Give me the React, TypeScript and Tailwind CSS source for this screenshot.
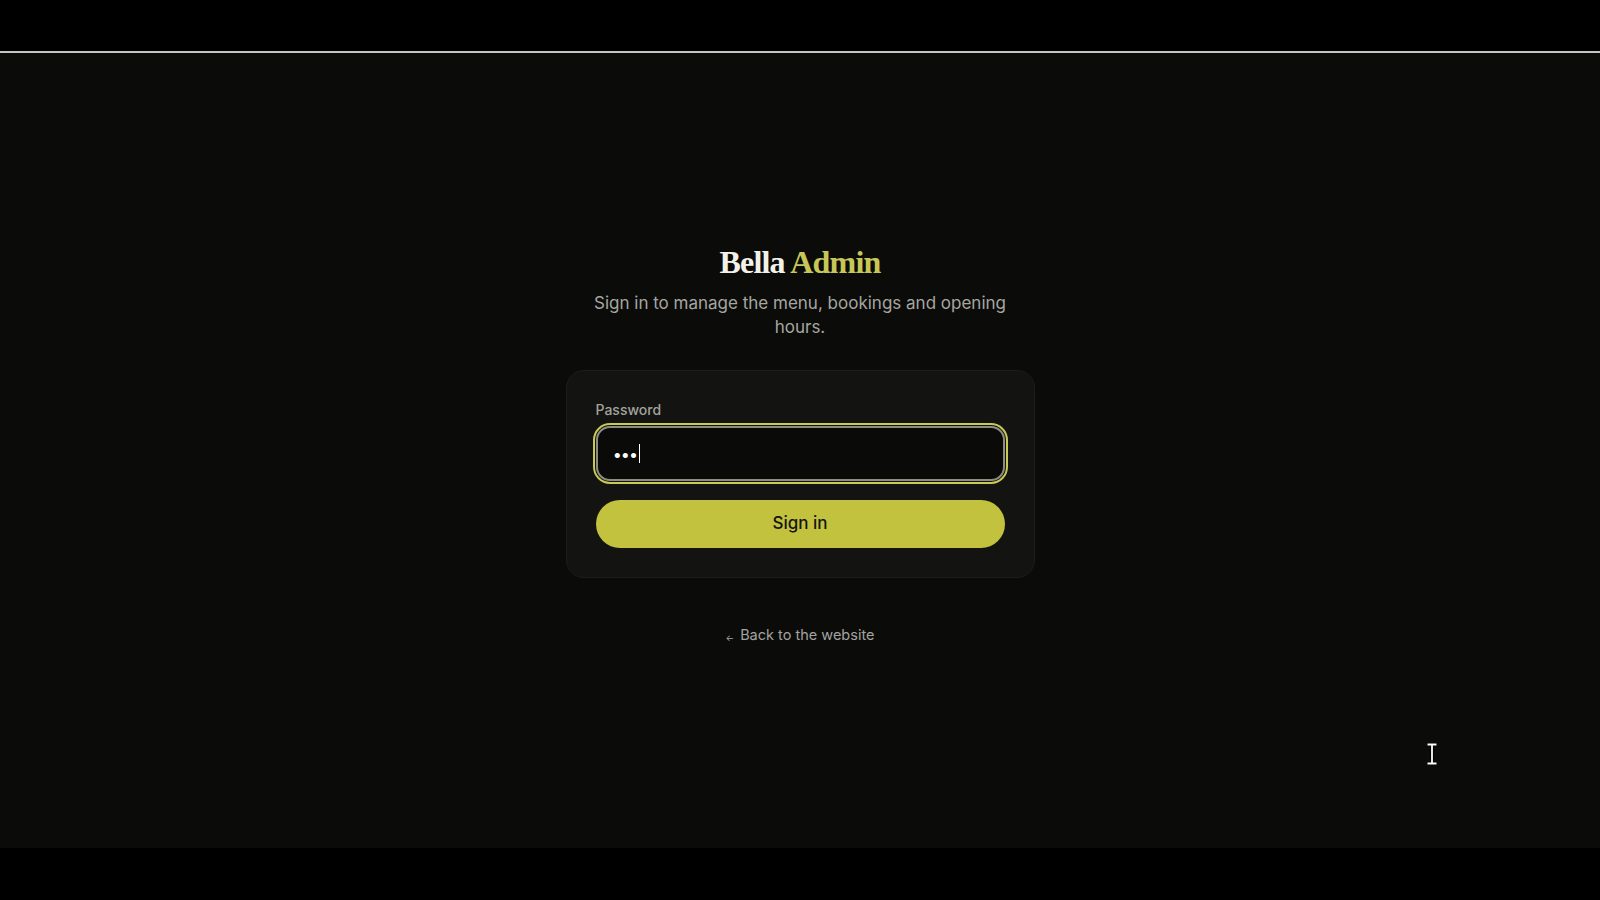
import React from 'react';

const App: React.FC = () => {
  return (
    <div className="min-h-screen bg-black flex flex-col font-[Inter,'Liberation_Sans',sans-serif]">
      <div className="h-[51px] bg-black" />
      <div className="h-[2px] bg-[#c4c4c4]" />

      <main className="relative h-[795px] bg-[#0b0b09] flex flex-col items-center pt-[190px]">
        <h1 className="font-['Liberation_Serif',serif] text-[32px] leading-[38px] font-bold tracking-tight">
          <span className="text-[#f4f1e8]">Bella</span>{' '}
          <span className="text-[#c6c756]">Admin</span>
        </h1>
        <p className="mt-[10px] max-w-[430px] text-center text-[17px] leading-[24px] text-[#a6a6a0]">
          Sign in to manage the menu, bookings and opening hours.
        </p>

        <div className="mt-[31px] w-[469px] rounded-[18px] border border-[#1d1d1a] bg-[#131311] p-[29px]">
          <label className="block text-sm leading-5 font-medium text-[#a3a39c] mb-1.5">Password</label>
          <div className="flex h-[55px] items-center rounded-[14px] border-2 border-[#8e8e80] bg-[#0a0a08] px-4 ring-2 ring-[#c8ca55] ring-offset-1 ring-offset-[#131311]">
            <span className="text-[16px] font-bold tracking-[0.5px] text-white">•••</span>
            <span className="ml-[1px] h-[19px] w-[1.5px] bg-white" />
          </div>
          <button className="mt-[19px] h-12 w-full rounded-full bg-[#c3c23f] text-[17px] font-medium text-[#141410]">
            Sign in
          </button>
        </div>

        <a href="#" className="mt-[47px] text-[14.5px] leading-5 text-[#a3a3a0] flex items-center gap-1.5">
          <span className="text-[9px] leading-none mt-1">←</span>
          <span>Back to the website</span>
        </a>

        {/* mouse cursor */}
        <svg className="absolute left-[1426px] top-[690px]" width="12" height="22" viewBox="0 0 12 22">
          <path d="M1 1h10M6 1v20M1 21h10" stroke="#000" strokeWidth="4" fill="none" />
          <path d="M1.5 1.5h9M6 1.5v19M1.5 20.5h9" stroke="#fff" strokeWidth="1.8" fill="none" />
        </svg>
      </main>

      <div className="h-[52px] bg-black" />
    </div>
  );
};

export default App;
